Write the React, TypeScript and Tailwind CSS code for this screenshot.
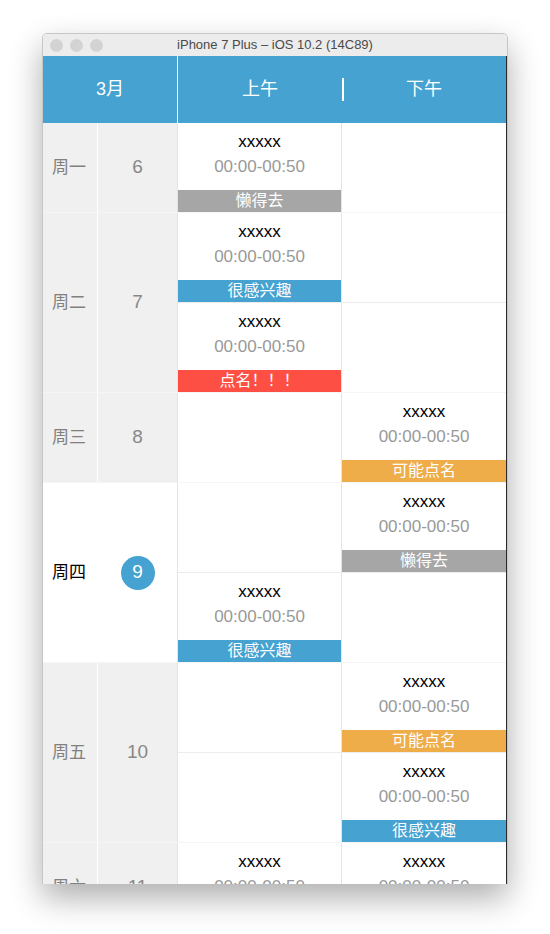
import React from 'react';

type Tag = { text: string; color: string };
type Slot = { am?: Tag; pm?: Tag };
type Day = { week: string; date: number; today?: boolean; slots: Slot[] };

const lazy = { text: '懒得去', color: 'bg-[#a6a6a6]' };
const like = { text: '很感兴趣', color: 'bg-[#45a2d1]' };
const call = { text: '点名！！！', color: 'bg-[#fe4f45]' };
const maybe = { text: '可能点名', color: 'bg-[#efad4a]' };

const days: Day[] = [
  { week: '周一', date: 6, slots: [{ am: lazy }] },
  { week: '周二', date: 7, slots: [{ am: like }, { am: call }] },
  { week: '周三', date: 8, slots: [{ pm: maybe }] },
  { week: '周四', date: 9, today: true, slots: [{ pm: lazy }, { am: like }] },
  { week: '周五', date: 10, slots: [{ pm: maybe }, { pm: like }] },
  { week: '周六', date: 11, slots: [{ am: lazy, pm: like }] },
];

function Cell({ tag, right }: { tag?: Tag; right?: boolean }) {
  return (
    <div className={`flex h-[89px] w-[164px] flex-col items-center bg-white ${right ? '' : 'border-r border-[#e4e4e4]'}`}>
      {tag && (
        <>
          <p className="mt-[9px] text-[17px] leading-[20px] text-black">xxxxx</p>
          <p className="mt-[5px] text-[17px] leading-[20px] text-[#999]">00:00-00:50</p>
          <div className={`mt-auto flex h-[22px] w-full items-center justify-center text-[16px] leading-none text-white ${tag.color}`}>
            {tag.text}
          </div>
        </>
      )}
    </div>
  );
}

function DayRow({ day }: { day: Day }) {
  const bg = day.today ? 'bg-white' : 'bg-[#eff0ef]';
  return (
    <div className="flex border-b border-[#f4f5f4]">
      <div className={`flex w-[54px] items-center pl-[9px] text-[17px] ${bg} ${day.today ? 'text-black' : 'text-[#808080]'}`}>
        {day.week}
      </div>
      <div className={`flex w-[80px] items-center justify-center border-l border-white ${bg}`}>
        {day.today ? (
          <span className="flex h-[34px] w-[34px] items-center justify-center rounded-full bg-[#45a2d1] text-[19px] text-white">
            {day.date}
          </span>
        ) : (
          <span className="text-[19px] text-[#888]">{day.date}</span>
        )}
      </div>
      <div className="flex flex-col border-l border-[#e4e4e4]">
        {day.slots.map((s, i) => (
          <div key={i} className={`flex ${i < day.slots.length - 1 ? 'border-b border-[#ececec]' : ''}`}>
            <Cell tag={s.am} />
            <Cell tag={s.pm} right />
          </div>
        ))}
      </div>
    </div>
  );
}

export default function App() {
  return (
    <div className="h-[934px] w-[550px] overflow-hidden bg-white pl-[42px] pt-[33px] font-['Liberation_Sans','Noto_Sans_CJK_SC',sans-serif]">
      <div className="flex h-[851px] w-[466px] flex-col overflow-hidden rounded-t-[5px] border border-b-0 border-[#c6c6c6] shadow-[0_14px_32px_rgba(0,0,0,0.32)]">
        {/* 타이틀 바 */}
        <div className="relative flex h-[22px] shrink-0 items-center justify-center bg-[#ececec]">
          <div className="absolute left-[7px] top-[5px] flex gap-[7px]">
            <span className="h-[13px] w-[13px] rounded-full bg-[#d3d3d3]" />
            <span className="h-[13px] w-[13px] rounded-full bg-[#d3d3d3]" />
            <span className="h-[13px] w-[13px] rounded-full bg-[#d3d3d3]" />
          </div>
          <span className="text-[13px] text-[#4a4a4a]">iPhone 7 Plus – iOS 10.2 (14C89)</span>
        </div>
        <div className="flex flex-1 flex-col overflow-hidden border-r border-[#2a2a2a]">
          {/* 헤더 */}
          <div className="flex h-[67px] shrink-0 bg-[#45a2d1] text-[18px] text-white">
            <div className="flex w-[135px] items-center justify-center border-r border-white">3月</div>
            <div className="flex w-[164px] items-center justify-center">上午</div>
            <div className="relative flex flex-1 items-center justify-center">
              <span className="absolute left-0 top-[22px] h-[23px] w-[2px] bg-white" />
              下午
            </div>
          </div>
          {days.map((d) => (
            <DayRow key={d.week} day={d} />
          ))}
        </div>
      </div>
    </div>
  );
}
